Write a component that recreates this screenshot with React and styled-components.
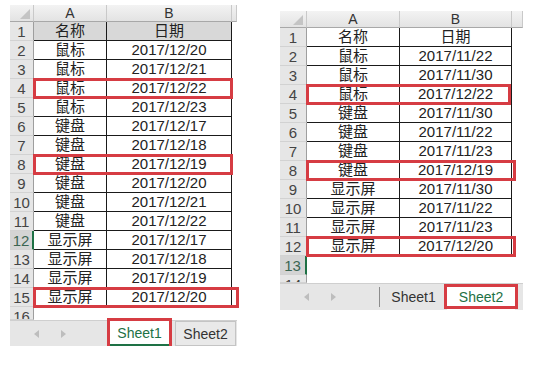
import React from "react";
import styled, { createGlobalStyle } from "styled-components";

const GlobalStyle = createGlobalStyle`
  body {
    margin: 0;
    background: #ffffff;
    font-family: "Liberation Sans", "Noto Sans CJK SC", sans-serif;
  }
  * { box-sizing: border-box; }
`;

const RED = "#d63c43";
const GREEN = "#1e7145";

const leftSheet = {
  cols: [24, 73, 125, 5],
  top: 0,
  rows: [
    ["名称", "日期"],
    ["鼠标", "2017/12/20"],
    ["鼠标", "2017/12/21"],
    ["鼠标", "2017/12/22", 200],
    ["鼠标", "2017/12/23"],
    ["键盘", "2017/12/17"],
    ["键盘", "2017/12/18"],
    ["键盘", "2017/12/19", 200],
    ["键盘", "2017/12/20"],
    ["键盘", "2017/12/21"],
    ["键盘", "2017/12/22"],
    ["显示屏", "2017/12/17"],
    ["显示屏", "2017/12/18"],
    ["显示屏", "2017/12/19"],
    ["显示屏", "2017/12/20", 206],
  ],
  titleShaded: true,
  selected: 12,
  tail: [{ n: 16, h: 13 }],
  tabs: { nav: 100, active: 0, widths: [59, 61], gap: 6 },
};

const rightSheet = {
  cols: [27, 93, 112, 11],
  top: 6,
  rows: [
    ["名称", "日期"],
    ["鼠标", "2017/11/22"],
    ["鼠标", "2017/11/30"],
    ["鼠标", "2017/12/22", 205],
    ["键盘", "2017/11/30"],
    ["键盘", "2017/11/22"],
    ["键盘", "2017/11/23"],
    ["键盘", "2017/12/19", 210],
    ["显示屏", "2017/11/30"],
    ["显示屏", "2017/11/22"],
    ["显示屏", "2017/11/23"],
    ["显示屏", "2017/12/20", 210],
  ],
  titleShaded: false,
  selected: 13,
  tail: [{ n: 13, h: 19 }, { n: 14, h: 8 }],
  tabs: { nav: 100, active: 1, widths: [67, 68], gap: 0, divider: true },
};

const Page = styled.div`
  display: flex;
  align-items: flex-start;
  gap: 43px;
  padding: 5px 0 0 10px;
`;

const Panel = styled.div`
  display: flex;
  flex-direction: column;
  margin-top: ${(p) => p.$top}px;
  width: ${(p) => p.$width}px;
`;

const Row = styled.div`
  position: relative;
  display: grid;
  grid-template-columns: ${(p) => p.$cols.map((c) => c + "px").join(" ")};
  height: ${(p) => p.$h}px;
  overflow: ${(p) => (p.$clip ? "hidden" : "visible")};
`;

const Corner = styled.div`
  position: relative;
  background: linear-gradient(#f3f3f3, #e3e3e3);
  border-right: 1px solid #c9c9c9;
  border-bottom: 1px solid #a8a8a8;

  &::after {
    content: "";
    position: absolute;
    right: 3px;
    bottom: 2px;
    border-style: solid;
    border-width: 0 0 10px 10px;
    border-color: transparent transparent #c4c4c4 transparent;
  }
`;

const ColHead = styled.div`
  background: linear-gradient(#f3f3f3, #e3e3e3);
  border-right: 1px solid #c9c9c9;
  border-bottom: 1px solid #a8a8a8;
  color: #333;
  font-size: 14px;
  line-height: 16px;
  text-align: center;
`;

const RowHead = styled.div`
  background: ${(p) => (p.$sel ? "#d4d4d4" : "#e6e6e6")};
  border-right: ${(p) => (p.$sel ? `2px solid ${GREEN}` : "1px solid #9e9e9e")};
  border-bottom: 1px solid #d2d2d2;
  color: ${(p) => (p.$sel ? "#3b6552" : "#444")};
  font-size: 15px;
  line-height: 19px;
  text-align: center;
  overflow: hidden;
`;

const Cell = styled.div`
  background: ${(p) => (p.$shade ? "#d8d8d8" : "#ffffff")};
  border-right: ${(p) => (p.$lined ? "1px solid #1a1a1a" : "none")};
  border-bottom: ${(p) => (p.$lined ? "1px solid #1a1a1a" : "none")};
  color: #222;
  font-size: 15px;
  line-height: 18px;
  text-align: center;
  white-space: nowrap;
`;

const Mark = styled.span`
  position: absolute;
  top: -1px;
  left: ${(p) => p.$x}px;
  width: ${(p) => p.$w}px;
  height: 21px;
  border: 3px solid ${RED};
  pointer-events: none;
  z-index: 2;
`;

const TabBar = styled.div`
  display: flex;
  align-items: stretch;
  height: ${(p) => p.$h}px;
  background: #e6e6e6;
  border-top: 1px solid #cfcfcf;
`;

const Nav = styled.div`
  position: relative;
  display: flex;
  align-items: center;
  gap: 22px;
  width: ${(p) => p.$w}px;
  padding-left: 24px;

  ${(p) =>
    p.$divider &&
    `&::after {
      content: "";
      position: absolute;
      right: 0;
      top: 3px;
      bottom: 3px;
      width: 1px;
      background: #8c8c8c;
    }`}
`;

const Tab = styled.div`
  position: relative;
  width: ${(p) => p.$w}px;
  margin-left: ${(p) => p.$gap}px;
  display: flex;
  align-items: center;
  justify-content: center;
  font-size: 14px;
  color: ${(p) => (p.$active ? GREEN : "#333")};
  background: ${(p) => (p.$active ? "#ffffff" : p.$flat ? "transparent" : "#e9e9e9")};
  border: ${(p) => (p.$flat || p.$active ? "none" : "1px solid #c4c4c4")};
  border-bottom: ${(p) => (p.$active && !p.$flat ? `2px solid ${GREEN}` : undefined)};
`;

const TabMark = styled.span`
  position: absolute;
  top: ${(p) => p.$t}px;
  bottom: ${(p) => p.$b}px;
  left: -3px;
  right: -3px;
  border: 3px solid ${RED};
  pointer-events: none;
`;

const Arrow = ({ dir }) => (
  <svg width="5" height="8" viewBox="0 0 5 8">
    <polygon points={dir === "l" ? "5,0 0,4 5,8" : "0,0 5,4 0,8"} fill="#bdbdbd" />
  </svg>
);

const Sheet = ({ s }) => {
  const total = s.cols.reduce((a, b) => a + b, 0);
  const markX = s.cols[0] - 1;
  const names = ["Sheet1", "Sheet2"];

  return (
    <Panel $top={s.top} $width={total}>
      <Row $cols={s.cols} $h={17}>
        <Corner />
        <ColHead>A</ColHead>
        <ColHead>B</ColHead>
        <ColHead />
      </Row>

      {s.rows.map(([a, b, mark], i) => (
        <Row key={i} $cols={s.cols} $h={19}>
          <RowHead $sel={s.selected === i + 1}>{i + 1}</RowHead>
          <Cell $lined $shade={i === 0 && s.titleShaded}>{a}</Cell>
          <Cell $lined $shade={i === 0 && s.titleShaded}>{b}</Cell>
          <Cell />
          {mark && <Mark $x={markX} $w={mark} />}
        </Row>
      ))}

      {s.tail.map((t) => (
        <Row key={t.n} $cols={s.cols} $h={t.h} $clip>
          <RowHead $sel={s.selected === t.n}>{t.n}</RowHead>
          <Cell />
          <Cell />
          <Cell />
        </Row>
      ))}

      <TabBar $h={s.tabs.divider ? 27 : 26}>
        <Nav $w={s.tabs.nav} $divider={s.tabs.divider}>
          <Arrow dir="l" />
          <Arrow dir="r" />
        </Nav>
        {names.map((n, i) => (
          <Tab
            key={n}
            $w={s.tabs.widths[i]}
            $gap={i === 1 ? s.tabs.gap : 0}
            $active={s.tabs.active === i}
            $flat={s.tabs.divider}
          >
            {n}
            {s.tabs.active === i && (
              <TabMark $t={s.tabs.divider ? 0 : -3} $b={s.tabs.divider ? 1 : -6} />
            )}
          </Tab>
        ))}
      </TabBar>
    </Panel>
  );
};

export default function App() {
  return (
    <>
      <GlobalStyle />
      <Page>
        <Sheet s={leftSheet} />
        <Sheet s={rightSheet} />
      </Page>
    </>
  );
}
